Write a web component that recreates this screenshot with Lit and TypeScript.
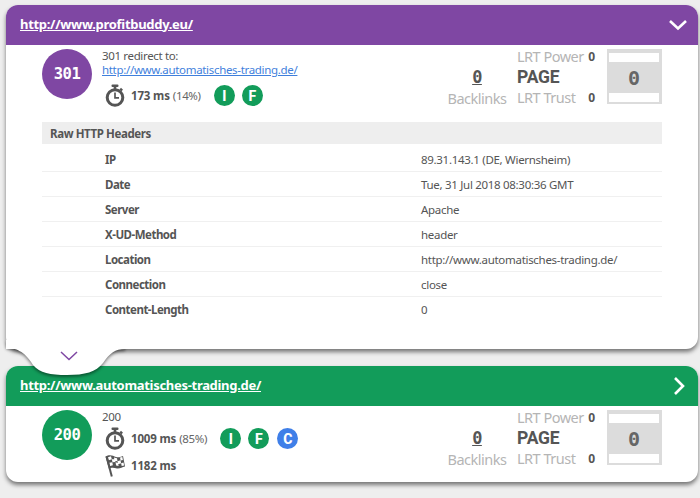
import { LitElement, html, css, svg } from "lit";
import { customElement } from "lit/decorators.js";

const rows: [string, string][] = [
  ["IP", "89.31.143.1 (DE, Wiernsheim)"],
  ["Date", "Tue, 31 Jul 2018 08:30:36 GMT"],
  ["Server", "Apache"],
  ["X-UD-Method", "header"],
  ["Location", "http://www.automatisches-trading.de/"],
  ["Connection", "close"],
  ["Content-Length", "0"],
];

const timer = html`<svg class="ico" viewBox="0 0 20 23" width="20" height="23">
  <rect x="6.5" y="0.5" width="7" height="2.4" rx="1" fill="#555"/>
  <rect x="8.7" y="2" width="2.6" height="3.5" fill="#555"/>
  <path d="M15.2 4.6l2 1.9" stroke="#555" stroke-width="2.4" fill="none"/>
  <circle cx="10" cy="13.5" r="7.8" fill="none" stroke="#555" stroke-width="3"/>
  <path d="M10 8.5v5.3h4" stroke="#555" stroke-width="1.7" fill="none"/>
</svg>`;

const flag = html`<svg class="ico" viewBox="0 0 20 23" width="20" height="23">
  <path d="M0.500 2.500C5 0 8 2 11 3C14 3.800 16 2.800 18 2L20 12.500C17 13 15 15 12 14.500C9 14 7 13 4 15z" fill="#555"/>
  <path d="M3 3.300l3-1 .8 3-3 1zM9 3.500l3 .8.500 3-3-.5zM15 3.500l2.300-.6.600 3-2.300.6zM6.800 5.300l3-.2.700 3-3 .2zM12.500 7.300l3-1 .6 3-3 1zM4.300 8.800l3-.5.600 3-2.800.6zM10.500 8.300l2.500.6.600 3-2.500-.5zM16.100 9.300l2.400-.8.600 2.900-2.400.7z" fill="#fff"/>
  <path d="M1.500 2.500l5.300 20" stroke="#555" stroke-width="2" fill="none"/>
</svg>`;

const chevDown = svg`<path d="M2 2l8 7.500 8-7.500" fill="none" stroke="currentColor" stroke-width="2.600"/>`;

@customElement("app-root")
export class AppRoot extends LitElement {
  static styles = css`
    :host {
      display: block;
      width: 700px;
      height: 498px;
      overflow: hidden;
      background: #eeeeee;
      font-family: "Noto Sans", "Open Sans", sans-serif;
      font-size: 12px;
      color: #555;
      position: relative;
    }
    .page { padding: 5px 2px 0 6px; }
    .card {
      background: #fff;
      border-radius: 12px;
      box-shadow: 0 3px 4px 0 rgba(0,0,0,.5);
    }
    .first { height: 344px; }
    .second { height: 116px; margin-top: 17px; }
    .head {
      height: 40px;
      box-sizing: border-box;
      padding: 0 10px 3px 14px;
      border-radius: 12px 12px 0 0;
      display: flex;
      align-items: center;
      justify-content: space-between;
      color: #fff;
      font-weight: 700;
      font-size: 13px;
      letter-spacing: -0.3px;
    }
    .head a { color: #fff; text-decoration: underline; }
    .head svg { margin-top: 3px; }
    .purple { background: #7f47a3; }
    .green { background: #129c5a; }
    .summary {
      display: flex;
      padding: 4px 36px 0 36px;
      height: 77px;
      box-sizing: border-box;
    }
    .second .summary { height: 76px; }
    .code {
      width: 50px;
      height: 50px;
      border-radius: 50%;
      color: #fff;
      display: flex;
      align-items: center;
      justify-content: center;
      font-family: "DejaVu Sans Mono", monospace;
      font-weight: 700;
      font-size: 15.5px;
      letter-spacing: -0.5px;
      flex: none;
    }
    .info { margin-left: 10px; flex: 1; line-height: 14px; font-size: 11.5px; letter-spacing: -0.35px; }
    .info a { color: #3f7fdc; text-decoration: underline; display: block; letter-spacing: -0.32px; }
    .timing { display: flex; align-items: center; margin-top: 7px; height: 23px; padding-left: 3px; }
    .second .timing { margin-top: 3px; }
    .second .timing.total { margin-top: 4px; }
    .timing .ico { margin-right: 6px; flex: none; }
    .timing b { font-weight: 700; letter-spacing: -0.15px; }
    .timing .pct { margin-left: 3px; color: #666; }
    .badges { display: flex; gap: 7px; margin-left: 13px; }
    .second .badges { margin-left: 13px; }
    .badge {
      width: 21px;
      height: 21px;
      border-radius: 50%;
      background: #129c5a;
      color: #fff;
      font-weight: 800;
      font-size: 14px;
      font-family: "Roboto", sans-serif;
      display: flex;
      align-items: center;
      justify-content: center;
    }
    .badge.blue { background: #3f7fe8; margin-left: 1px; }
    .back {
      width: 60px;
      text-align: center;
      color: #b5b5b5;
      font-size: 14.5px;
      letter-spacing: -0.5px;
      margin-right: 10px;
      margin-top: 16px;
      display: flex;
      flex-direction: column;
      align-items: center;
      white-space: nowrap;
      line-height: 18px;
    }
    .back u {
      color: #555;
      font-family: "DejaVu Sans Mono", monospace;
      font-weight: 700;
      font-size: 17px;
      line-height: 24px;
      height: 24px;
    }
    .lrt { width: 78px; margin-right: 12px; margin-top: -3px; color: #b5b5b5; font-size: 14.5px; letter-spacing: -0.5px; }
    .lrt > div { display: flex; justify-content: space-between; align-items: center; height: 20px; white-space: nowrap; }
    .lrt b { color: #555; font-size: 12px; letter-spacing: 0; }
    .lrt .pg { height: 21px; box-sizing: border-box; padding-top: 1px; color: #555; font-weight: 700; font-size: 17.5px; font-family: "Roboto", sans-serif; letter-spacing: -0.2px; }
    .score {
      width: 55px;
      height: 55px;
      background: #dcdcdc;
      box-sizing: border-box;
      padding: 4px 3px 2px 2px;
      display: flex;
      flex-direction: column;
      justify-content: space-between;
      align-items: center;
      font-family: "DejaVu Sans Mono", monospace;
      font-weight: 700;
      font-size: 20px;
      color: #666;
      flex: none;
    }
    .score i { display: block; width: 100%; height: 9px; background: #fff; }
    table { border-collapse: collapse; width: 620px; margin-left: 36px; table-layout: fixed; letter-spacing: -0.3px; font-size: 11.5px; }
    .c1 { width: 379px; }
    th { background: #eee; height: 22px; padding: 0 0 0 8px; text-align: left; font-weight: 700; letter-spacing: -0.4px; }
    td { height: 24px; padding: 0; border-bottom: 1px solid #f0f0f0; }
    tr:last-child td { border-bottom: none; }
    .spacer th { background: none; height: 3px; }
    td.k { font-weight: 700; padding-left: 63px; letter-spacing: -0.5px; }
    .tab { position: absolute; left: 0; top: 340px; }
    .bump { filter: drop-shadow(0 2px 1.5px rgba(0,0,0,.45)); }
    .chev { position: absolute; left: 59px; top: 350px; }
    .arrow { margin-right: 3px; }
  `;

  private stats() {
    return html`
      <div class="back"><u>0</u><span>Backlinks</span></div>
      <div class="lrt">
        <div><span>LRT Power</span><b>0</b></div>
        <div class="pg">PAGE</div>
        <div><span>LRT Trust</span><b>0</b></div>
      </div>
      <div class="score"><i></i>0<i></i></div>
    `;
  }

  render() {
    return html`
      <div class="page">
        <section class="card first">
          <header class="head purple">
            <a href="#">http://www.profitbuddy.eu/</a>
            <svg width="20" height="12" viewBox="0 0 20 12" color="#fff">${chevDown}</svg>
          </header>
          <div class="summary">
            <div class="code purple">301</div>
            <div class="info">
              <div>301 redirect to:</div>
              <a href="#">http://www.automatisches-trading.de/</a>
              <div class="timing">
                ${timer}<b>173 ms</b><span class="pct">(14%)</span>
                <div class="badges"><span class="badge">I</span><span class="badge">F</span></div>
              </div>
            </div>
            ${this.stats()}
          </div>
          <table>
            <colgroup><col class="c1" /><col /></colgroup>
            <tr><th colspan="2">Raw HTTP Headers</th></tr>
            <tr class="spacer"><th colspan="2"></th></tr>
            ${rows.map(([k, v]) => html`<tr><td class="k">${k}</td><td>${v}</td></tr>`)}
          </table>
        </section>
        <section class="card second">
          <header class="head green">
            <a href="#">http://www.automatisches-trading.de/</a>
            <svg class="arrow" width="12" height="20" viewBox="0 0 12 20"><path d="M2 2l8 8-8 8" fill="none" stroke="#fff" stroke-width="2.600"/></svg>
          </header>
          <div class="summary">
            <div class="code green">200</div>
            <div class="info">
              <div>200</div>
              <div class="timing">
                ${timer}<b>1009 ms</b><span class="pct">(85%)</span>
                <div class="badges"><span class="badge">I</span><span class="badge">F</span><span class="badge blue">C</span></div>
              </div>
              <div class="timing total">${flag}<b>1182 ms</b></div>
            </div>
            ${this.stats()}
          </div>
        </section>
      </div>
      <svg class="tab" viewBox="0 0 132 40" width="132" height="40">
        <path class="bump" d="M6 7 C16 9 24 10 33 25 C40 33 50 35 67 35 C85 35 96 32 103 23 C110 13 115 9 125 9 L125 0 L6 0 Z" fill="#fff"/>
        <rect x="6" y="0" width="126" height="9" fill="#fff"/>
      </svg>
      <svg class="chev" width="20" height="12" viewBox="0 0 20 12">
        <path d="M2 2l8 7.500 8-7.500" fill="none" stroke="#7f47a3" stroke-width="1.500"/>
      </svg>
    `;
  }
}
